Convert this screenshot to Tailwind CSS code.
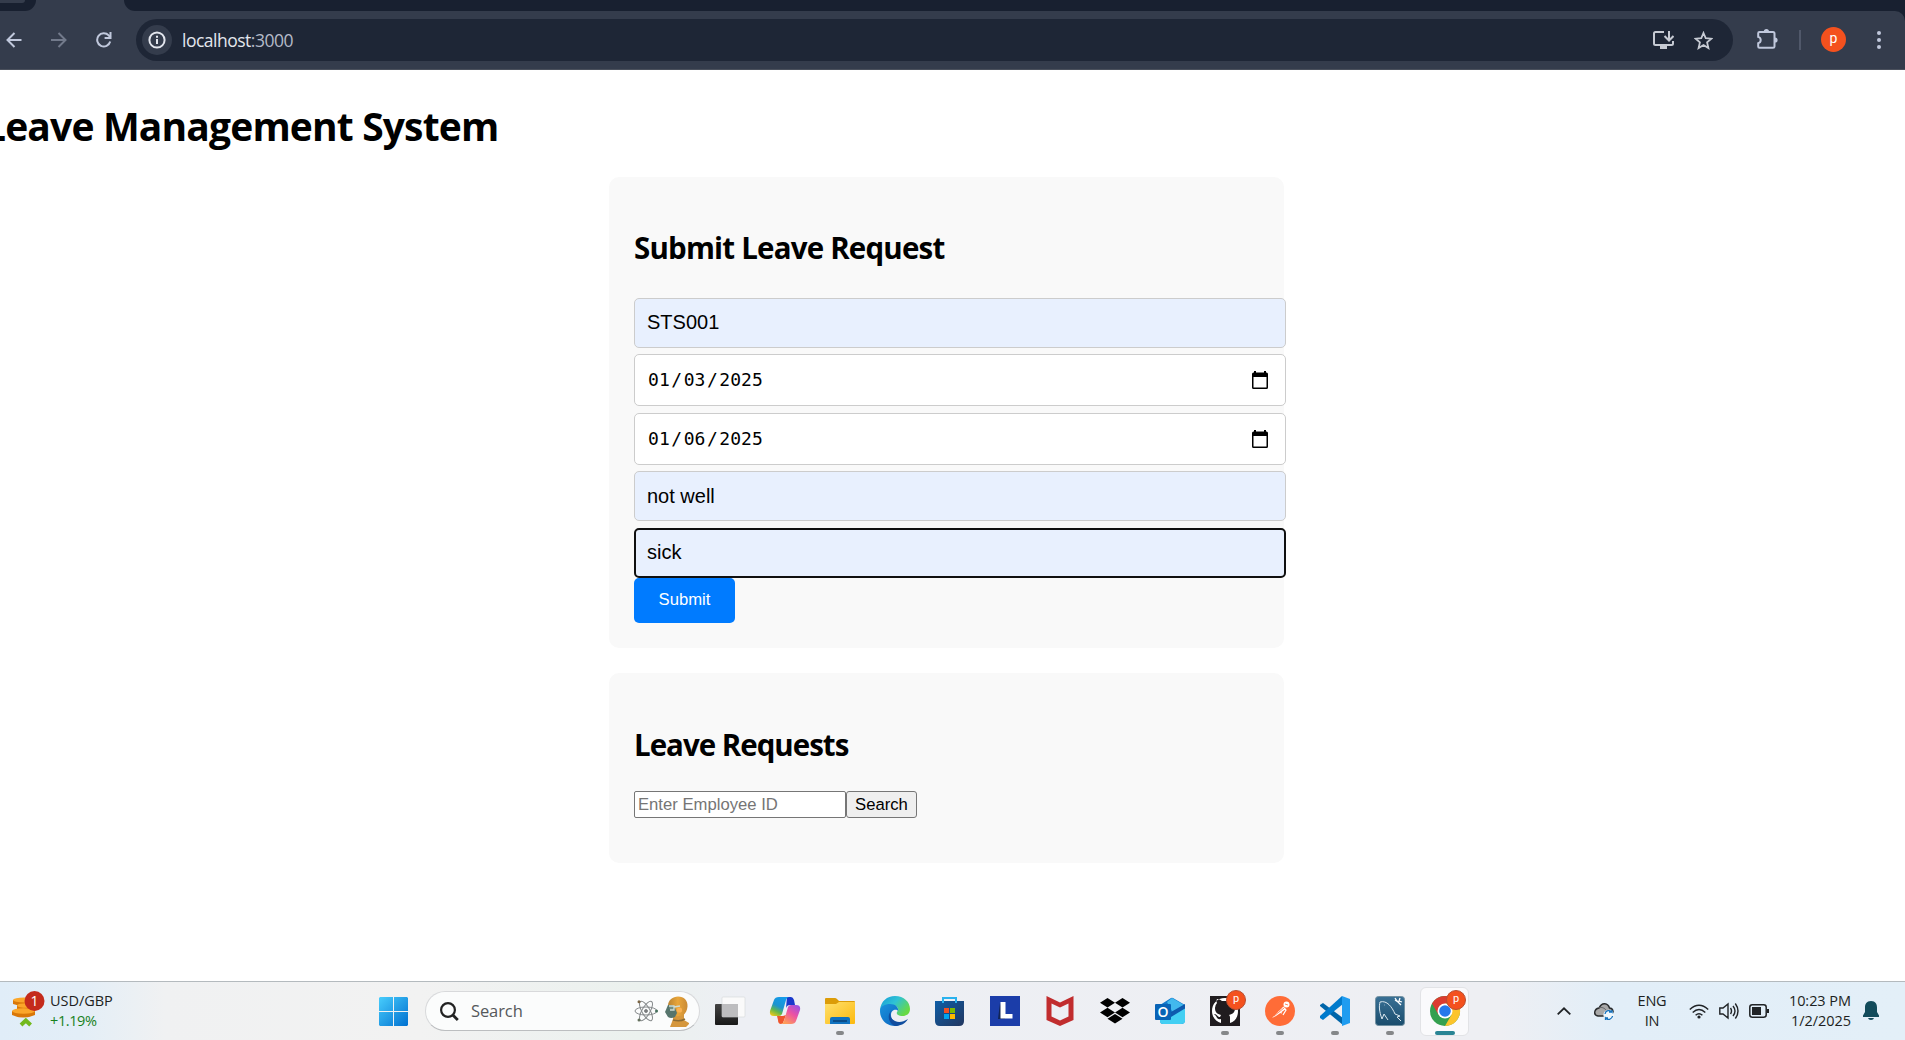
<!DOCTYPE html>
<html lang="en">
<head>
<meta charset="utf-8">
<title>Leave Management System</title>
<script src="https://cdn.jsdelivr.net/npm/@tailwindcss/browser@4"></script>
</head>
<body class="w-[1905px] h-[1040px] overflow-hidden bg-white text-black flex flex-col font-['Open_Sans','Noto_Sans',sans-serif]">

<!-- Browser chrome -->
<header class="h-[70px] shrink-0 bg-[#343c4c] border-b border-[#4a505c] flex flex-col">
  <div class="h-[11px] flex justify-between shrink-0">
    <div class="w-9 bg-[#182030] rounded-br-[14px]"><div class="w-[25px] h-[3px] bg-[#343c4c] rounded-br-lg"></div></div>
    <div class="w-[1781px] bg-[#182030] rounded-bl-[14px]"></div>
  </div>
  <div class="flex items-center h-[58px] bg-[#182030]">
   <div class="flex items-center w-full h-full bg-[#343c4c] rounded-tr-[10px]">
    <svg class="w-4 h-4 ml-[6px] shrink-0" viewBox="0 0 16 16" fill="none" stroke="#c0c8dc" stroke-width="2"><path d="M15.5 8H1.5M8.5 1 1.5 8l7 7"/></svg>
    <svg class="w-4 h-4 ml-[29px] shrink-0" viewBox="0 0 16 16" fill="none" stroke="#727a8b" stroke-width="2"><path d="M0 8h14M7.500 1l7 7-7 7"/></svg>
    <svg class="w-4 h-4 ml-[29px] shrink-0" viewBox="0 0 16 16" fill="none" stroke="#c0c8dc" stroke-width="2"><path d="M14.200 9.500A6.600 6.600 0 1 1 12.700 3.400L14.500 5.500"/><path d="M14.500 0v6H8.600"/></svg>
    <div class="ml-6 w-[1597px] h-[42px] rounded-full bg-[#1e2636] flex items-center shrink-0">
      <div class="ml-[6px] w-[30px] h-[30px] rounded-full bg-[#343c4c] flex items-center justify-center">
        <svg class="w-[18px] h-[18px]" viewBox="0 0 18 18" fill="none" stroke="#e3e6ee" stroke-width="2"><circle cx="9" cy="9" r="7.600"/><path d="M9 8v5M9 4.700v2"/></svg>
      </div>
      <div class="ml-[10px] text-[17.5px] leading-6 tracking-[-0.5px] text-[#e3e6ee]">localhost<span class="text-[#b4bac8]">:3000</span></div>
      <svg class="ml-auto w-[21px] h-[18px]" viewBox="0 0 21 18" fill="none" stroke="#c6cad3" stroke-width="2"><path d="M11 1H2.500Q1 1 1 2.500v10Q1 14 2.500 14h16q1.500 0 1.500-1.500V10"/><path d="M7 16.500h7" stroke-width="3"/><path d="M16 0v9M11.500 5l4.500 4.500L20.500 5"/></svg>
      <svg class="ml-[20px] mr-[20px] w-[19px] h-[19px]" viewBox="0 0 19 19" fill="none" stroke="#c6cad3" stroke-width="1.800"><path d="m9.500 2 2.200 5.200 5.700.5-4.300 3.700 1.300 5.600-4.900-3-4.900 3 1.300-5.600L1.600 7.700l5.700-.5Z"/></svg>
    </div>
    <svg class="ml-6 mb-[3px] w-[21px] h-[21px] shrink-0" viewBox="0 0 21 21"><path d="M2.500 4H16q1.500 0 1.500 1.500v13q0 1.300-1.500 1.300H2.500Q1.200 19.800 1.200 18.500V15.300a3.300 3.300 0 0 0 0-6.400V5.300Q1.200 4 2.500 4Z" fill="none" stroke="#c0c8dc" stroke-width="2"/><path d="M6.800 3.500a2.600 2.600 0 0 1 5.200 0zM18 9.400a2.600 2.600 0 0 1 0 5.200z" fill="#c0c8dc"/></svg>
    <div class="ml-[21px] w-[2px] h-5 bg-[#50586a]"></div>
    <div class="ml-5 mb-px w-[25px] h-[25px] rounded-full bg-[#f4511e] text-white text-[14px] leading-[22px] text-center font-['Roboto']">p</div>
    <div class="ml-[31px] flex flex-col gap-[3px]"><i class="w-1 h-1 rounded-full bg-[#c0c8dc]"></i><i class="w-1 h-1 rounded-full bg-[#c0c8dc]"></i><i class="w-1 h-1 rounded-full bg-[#c0c8dc]"></i></div>
   </div>
  </div>
</header>

<!-- Page -->
<main class="h-[911px] shrink-0 overflow-hidden">
  <h1 class="ml-[-16px] pt-[29px] h-[107px] text-[39px] leading-[54px] font-bold tracking-[-0.85px] whitespace-nowrap">Leave Management System</h1>
  <section class="ml-[609px] w-[675px] h-[471px] bg-[#f9f9f9] rounded-[10px] px-[25px] pt-[51px]">
    <h2 class="text-[29.5px] leading-10 font-bold tracking-[-0.8px] mb-[30px] whitespace-nowrap">Submit Leave Request</h2>
    <form class="w-[652px] text-[20px] font-['Liberation_Sans',sans-serif]">
      <div class="h-[50px] mb-[6px] border border-[#ccc] rounded-[5px] bg-[#e8f0fe] px-3 leading-[46px]">STS001</div>
      <div class="h-[52px] mb-[7px] border border-[#ccc] rounded-[5px] bg-white pl-[13px] pr-[17px] flex items-center justify-between">
        <div class="mb-[2px] font-['DejaVu_Sans_Mono',monospace] text-[18px] tracking-[0.05px]">01<span class="mx-[1.5px]">/</span>03<span class="mx-[1.5px]">/</span>2025</div>
        <svg class="w-4 h-[18px]" viewBox="0 0 16 18"><path d="M2 0h2v1.500h8V0h2v1.500h.5Q16 1.500 16 3v13.500q0 1.500-1.500 1.500h-13Q0 18 0 16.500V3q0-1.500 1.500-1.500H2ZM1.500 6v10.500h13V6Z"/></svg>
      </div>
      <div class="h-[52px] mb-[6px] border border-[#ccc] rounded-[5px] bg-white pl-[13px] pr-[17px] flex items-center justify-between">
        <div class="mb-[2px] font-['DejaVu_Sans_Mono',monospace] text-[18px] tracking-[0.05px]">01<span class="mx-[1.5px]">/</span>06<span class="mx-[1.5px]">/</span>2025</div>
        <svg class="w-4 h-[18px]" viewBox="0 0 16 18"><path d="M2 0h2v1.500h8V0h2v1.500h.5Q16 1.500 16 3v13.500q0 1.500-1.500 1.500h-13Q0 18 0 16.500V3q0-1.500 1.500-1.500H2ZM1.500 6v10.500h13V6Z"/></svg>
      </div>
      <div class="h-[50px] mb-[7px] border border-[#ccc] rounded-[5px] bg-[#e8f0fe] px-3 leading-[48px]">not well</div>
      <div class="h-[50px] border-2 border-[#101010] rounded-[5px] bg-[#e8f0fe] px-[11px] leading-[44px]">sick</div>
      <div class="w-[101px] h-[45px] rounded-[5px] bg-[#007bff] text-white text-[16.67px] leading-[43px] text-center">Submit</div>
    </form>
  </section>
  <section class="mt-[25px] ml-[609px] w-[675px] h-[190px] bg-[#f9f9f9] rounded-[10px] px-[25px] pt-[52px]">
    <h2 class="text-[29.5px] leading-10 font-bold tracking-[-1px] mb-[26px] whitespace-nowrap">Leave Requests</h2>
    <div class="flex text-[16.67px] leading-[25px] font-['Liberation_Sans',sans-serif]">
      <div class="w-[212px] h-[27px] border border-[#767676] rounded-[2px] bg-white text-[#757575] pl-[3px]">Enter Employee ID</div>
      <div class="w-[71px] h-[27px] border border-[#767676] rounded-[3px] bg-[#efefef] text-center">Search</div>
    </div>
  </section>
</main>

<!-- Taskbar -->
<footer class="h-[59px] shrink-0 border-t border-[#b4babe] flex items-center bg-[linear-gradient(90deg,#e0edf8_0,#e3eef7_80px,#f0f1f2_165px,#f2f2f2_420px,#ebf1ee_640px,#edeff4_740px,#eeeff3_1500px,#e2eef8_1610px,#e3eff8_1905px)] text-[#1d1f22]">
  <div class="w-[379px] flex items-center pl-[11px] shrink-0">
    <svg class="w-[35px] h-10" viewBox="0 0 35 40"><g fill="#d97708"><path d="M2 9v4q11 4 22 0V9z"/><path d="M6 14v5q9 3 20 0v-5z"/><path d="M1 20v4q11 5 23 0v-4z"/></g><g fill="#fba62a"><ellipse cx="13" cy="9" rx="11" ry="2.500"/><ellipse cx="16" cy="14.500" rx="10" ry="2.300"/><ellipse cx="12.500" cy="20" rx="11.500" ry="2.800"/></g><path d="m10 34 4.800-4.500L19.600 34" fill="none" stroke="#72b91d" stroke-width="4"/><circle cx="23.500" cy="10" r="10" fill="#c42b1c"/><text x="23.500" y="15" text-anchor="middle" font-family="Open Sans" font-size="14" fill="#fff">1</text></svg>
    <div class="ml-[4px] text-[14.5px] leading-5 tracking-[-0.05px]"><div>USD/GBP</div><div class="text-[#17811c] tracking-[-0.4px]">+1.19%</div></div>
  </div>
  <svg class="w-[29px] h-[29px] shrink-0" viewBox="0 0 29 29"><defs><linearGradient id="win" x1="0" y1="0" x2="29" y2="29" gradientUnits="userSpaceOnUse"><stop stop-color="#48cdfc"/><stop offset="1" stop-color="#0070d0"/></linearGradient></defs><path fill="url(#win)" d="M1 0h13v14H0V1ZM15 0h13l1 1v13H15ZM0 15h14v14H1l-1-1ZM15 15h14v13l-1 1H15Z"/></svg>
  <div class="ml-[17px] w-[275px] h-[40px] rounded-full bg-[#fbfcfc] border border-[#d8d9db] border-b-[#bcbec0] flex items-center shrink-0">
    <svg class="ml-[14px] w-[19px] h-[19px]" viewBox="0 0 19 19" fill="none" stroke="#222" stroke-width="2.200"><circle cx="8" cy="8" r="6.900"/><path d="m12.800 13 5 5" stroke-width="2.800"/></svg>
    <div class="ml-[12px] text-[16.5px] tracking-[-0.1px] text-[#55585b]">Search</div>
    <svg class="ml-auto w-6 h-[22px]" viewBox="0 0 24 22" fill="none" stroke="#85898b" stroke-width="1"><ellipse cx="12" cy="11" rx="11" ry="4"/><ellipse cx="12" cy="11" rx="11" ry="4" transform="rotate(60 12 11)"/><ellipse cx="12" cy="11" rx="11" ry="4" transform="rotate(120 12 11)"/><circle cx="12" cy="11" r="1.500" fill="#777"/><circle cx="5" cy="1.800" r="1.500" fill="#7b6544" stroke="none"/><circle cx="22.500" cy="11" r="1.500" fill="#47705d" stroke="none"/><circle cx="5" cy="20" r="1.500" fill="#64715d" stroke="none"/></svg>
    <svg class="ml-[6px] mr-[10px] w-[25px] h-[31px]" viewBox="0 0 25 31"><defs><linearGradient id="head" x1="0" x2="1"><stop stop-color="#b98332"/><stop offset=".5" stop-color="#e9a63a"/><stop offset="1" stop-color="#c98a35"/></linearGradient></defs><path d="M9 18h11v6l5 3v1l-3 3H6q2-5 3-8Z" fill="#d5973d"/><path d="M4 10C4 4 9 .5 14 .5c6 0 10 4 9.500 10-.3 4-2 7-4.500 9l-8 1-5-3Z" fill="url(#head)"/><path d="m4 9-3 7 3 5q3 2 7 0l2-4-2-5-3-3Z" fill="#56756c"/><path d="M5 10h5v4H6M10 11l6-1" stroke="#cfdcd4" stroke-width="1.300" fill="#718f85"/><circle cx="15.500" cy="14" r="2.600" fill="#fbb252"/><path d="M9 24q7 2 12-1" stroke="#8b6b32" stroke-width="1.500" fill="none"/></svg>
  </div>

  <div class="ml-[5px] flex shrink-0 h-full [&>div]:w-[55px] [&>div]:h-full [&>div]:relative [&>div]:flex [&>div]:items-center [&>div]:justify-center [&_svg]:w-[30px] [&_svg]:h-[30px] [&_svg]:overflow-visible">
    <div class="-ml-[3px]"><svg viewBox="0 0 30 30"><defs><linearGradient id="tv" x1="0" y1="0" x2="0" y2="1"><stop stop-color="#444"/><stop offset="1" stop-color="#181818"/></linearGradient></defs><rect y="8" width="23" height="21" rx="1" fill="url(#tv)"/><rect x="7" y="1" width="23" height="20" rx="1" fill="#fafafa" stroke="#d5d6d8" stroke-width=".6"/><path d="M7 8h16v13H7Z" fill="#bdbdbf"/></svg></div>
    <div><svg viewBox="0 0 30 30"><defs><linearGradient id="ca" x1=".6" y1="0" x2=".1" y2="1"><stop stop-color="#149bea"/><stop offset=".45" stop-color="#1c93cf"/><stop offset=".7" stop-color="#63b74b"/><stop offset="1" stop-color="#fbcb14"/></linearGradient><linearGradient id="cb" x1="1" y1="0" x2=".3" y2="1"><stop stop-color="#8c52ee"/><stop offset=".5" stop-color="#ec52a4"/><stop offset="1" stop-color="#ff9d57"/></linearGradient></defs><path d="M17 1h4q2 0 3 3l1 5h-5q-3 0-4 3Z" fill="#1938cc"/><path d="M7 20h6l3-1-3 8q-1 1-2 1-3 0-3-4Z" fill="#ef552d"/><path d="M9 1h10q-2 0-3 3l-4 14q-1 2-3 2H4q-5 0-4-5L4 4q1-3 5-3Z" fill="url(#ca)"/><path d="M21 9h5q5 0 4 5l-4 11q-1 3-5 3H11q2 0 3-3l4-14q1-2 3-2Z" fill="url(#cb)"/></svg></div>
    <div><svg viewBox="0 0 30 30"><defs><linearGradient id="fo" x1="0" y1="0" x2="1" y2="1"><stop stop-color="#ffe06c"/><stop offset="1" stop-color="#fcb90e"/></linearGradient></defs><path d="M0 3q0-1 1-1h9q1 0 2 1l2 2h15q1 0 1 1v6H0Z" fill="#dc9c08"/><path d="M0 8h11l3-2h16v21q0 1-1 1H1q-1 0-1-1Z" fill="url(#fo)"/><path d="M5 28v-5q0-2 2-2h16q2 0 2 2v5Z" fill="#0f71bf"/><path d="M8 25h14" stroke="#073f77" stroke-width="1.500"/></svg><i class="absolute bottom-[5px] w-2 h-1 rounded-full bg-[#858789]"></i></div>
    <div><svg viewBox="0 0 30 30"><defs><linearGradient id="ea" x1="0" y1="0" x2="1" y2=".6"><stop stop-color="#159ad7"/><stop offset=".5" stop-color="#2fc2d5"/><stop offset="1" stop-color="#68da43"/></linearGradient><linearGradient id="eb" x1="0" y1="0" x2="1" y2="1"><stop stop-color="#1a92dc"/><stop offset="1" stop-color="#0a60bd"/></linearGradient></defs><path d="M0 14C1 5 7 0 15 0c9 0 15 6 15 13 0 5-4 7-7 7-5 0-7-2-6-4 3-3 0-7-5-7C6 9 1 11 0 16Z" fill="url(#ea)"/><path d="M0 15C0 10 5 8 10 8c6 0 9 4 8 7-1-2-7-2-7 4 0 6 6 9 12 8-3 2-5 3-8 3C6 30 0 23 0 15Z" fill="url(#eb)"/><path d="M12 14c-3 3-2 9 3 11 4 2 8 1 13-2-3 5-8 7-13 7-6-2-9-11-3-16Z" fill="#104d9f"/></svg></div>
    <div><svg viewBox="0 0 30 30"><defs><linearGradient id="st" x1="0" y1="0" x2="1" y2="1"><stop stop-color="#0e5da6"/><stop offset="1" stop-color="#22365f"/></linearGradient></defs><path d="M0 5h29v20q0 5-5 5H5q-5 0-5-5Z" fill="url(#st)"/><path d="M8 7V2h13v5" fill="none" stroke="#29b2ee" stroke-width="2"/><path d="M9 12h5v5H9Z" fill="#f25022"/><path d="M15 12h5v5h-5Z" fill="#7fba00"/><path d="M9 18h5v5H9Z" fill="#00a4ef"/><path d="M15 18h5v5h-5Z" fill="#ffb900"/></svg></div>
    <div><svg viewBox="0 0 30 30"><path d="M0 0h30v30H0Z" fill="#1b3da9"/><path d="m10 7-2 16h7Z" fill="#102456"/><path d="M10.500 6h5v12h7v4.500H10.500Z" fill="#fff"/></svg></div>
    <div><svg viewBox="0 0 30 30"><path d="m1.500 0 13.500 6.500L28.500 0v24L15 30 1.500 24Zm5 7.500v13L15 24.500l8.500-4v-13L15 11.500Z" fill="#c12d2e" fill-rule="evenodd"/></svg></div>
    <div><svg viewBox="0 0 30 30"><path d="m7.500 2 7.500 4.800-7.500 4.800L0 6.800Zm15 0L30 6.800l-7.500 4.800L15 6.800Zm-15 9.800 7.500 4.700-7.500 4.800L0 16.500Zm15 0 7.500 4.700-7.500 4.800-7.500-4.800ZM15 18l7.500 4.700L15 27.500l-7.500-4.800Z" fill="#000"/></svg></div>
    <div><svg viewBox="0 0 30 30"><path d="M5 9 16 2q1-.6 2 0l12 7v15q0 4-4 4H8q-3 0-3-4Z" fill="#1479cb"/><path d="m12 6 5-4 12 7-11 8Z" fill="#42b8ed"/><path d="m16 16 14-8v8L16 24Z" fill="#0f56a9"/><path d="m5 22 25-10v13q0 3-4 3H8q-3 0-3-3Z" fill="#43cff3"/><path d="M16 17 29 9.500q1 1 1 3L16 21Z" fill="#0e5aae"/><rect y="8" width="16" height="16" rx="1" fill="#0863b6"/><text x="8" y="21" text-anchor="middle" font-family="Open Sans" font-weight="600" font-size="14" fill="#fff">O</text></svg></div>
    <div><svg viewBox="0 0 30 30"><path d="M0 0h30v30H0Z" fill="#201c1f"/><path d="M15 2C7 2 2 8 2 15c0 6 4 11 9 12v-4c-3 1-4-1-5-3l-2-2c3-.5 3 3 6 3l1-2c-4-1-6-3-6-7q0-3 2-5-1-2 0-4 3 0 5 2h6q2-2 5-2 1 2 0 4 2 2 2 5c0 4-2 6-6 7 1 1 1 2 1 3v5c5-1 8-6 8-12C28 8 23 2 15 2Z" fill="#fff"/></svg><i class="absolute bottom-[5px] w-2 h-1 rounded-full bg-[#858789]"></i><span class="absolute left-[29px] top-[8px] w-5 h-5 rounded-full bg-[#f4511e] border border-[#b84e31] text-white text-[11px] leading-[16px] text-center font-['Roboto']">p</span></div>
    <div><svg viewBox="0 0 30 30"><circle cx="15" cy="15" r="15" fill="#ff6c37"/><path d="m7 22 11-11 3 2-10 7Z" fill="#fff"/><circle cx="21.500" cy="8.500" r="3" fill="#fff"/><path d="m18 11 3 3-3 5M13 16l4 1" fill="none" stroke="#fff" stroke-width="1.200"/><path d="m9 20 10-8M20 8l3 1" stroke="#ff6c37" stroke-width=".8"/></svg><i class="absolute bottom-[5px] w-2 h-1 rounded-full bg-[#858789]"></i></div>
    <div><svg viewBox="0 0 30 30"><path d="m0 9 3-2 20 15v7L0 10Z" fill="#0065a9"/><path d="M22 0 0 20v2l3 2L23 8Z" fill="#007acc"/><path d="m22 0 8 3v24l-8 3Z" fill="#1f9cf0"/></svg><i class="absolute bottom-[5px] w-2 h-1 rounded-full bg-[#858789]"></i></div>
    <div><svg viewBox="0 0 30 30"><defs><linearGradient id="my" x1="0" y1="0" x2="0" y2="1"><stop stop-color="#397095"/><stop offset="1" stop-color="#1b4d6d"/></linearGradient></defs><rect x=".5" y=".5" width="29" height="29" rx="3" fill="url(#my)" stroke="#7190a1"/><path d="M7 23C4 15 4 10 5 6c7-2 12 5 15 12l5 2-3 1 4 4M7 23l2-5 4 6M9 9h.5" fill="none" stroke="#dbe7ee" stroke-width="1"/><path d="m20 2 2 3 4 4M20 4l3 2M25 2l-1 3 3 1" stroke="#fff" stroke-width="1.300" fill="none"/></svg><i class="absolute bottom-[5px] w-2 h-1 rounded-full bg-[#858789]"></i></div>
    <div><span class="absolute left-[3px] top-[5px] w-[49px] h-[49px] rounded-[6px] bg-[#fafafc] border border-[#e2e3e6]"></span><svg class="relative" viewBox="0 0 30 30"><circle cx="15" cy="15" r="15" fill="#34a04f"/><path d="M2 7.500A15 15 0 0 1 28 7.500H15L8.500 18.700Z" fill="#dc3c30"/><path d="M15 7.500h13A15 15 0 0 1 15 30l6.500-11.300Z" fill="#fcc42c"/><circle cx="15" cy="15" r="7.500" fill="#fff"/><circle cx="15" cy="15" r="5.800" fill="#2678ea"/></svg><i class="absolute bottom-[5px] w-5 h-1 rounded-full bg-[#298494]"></i><span class="absolute left-[29px] top-[8px] w-5 h-5 rounded-full bg-[#f4511e] border border-[#b84e31] text-white text-[11px] leading-[16px] text-center font-['Roboto']">p</span></div>
  </div>

  <div class="ml-auto mr-[26px] flex items-center shrink-0">
    <svg class="w-[14px] h-2" viewBox="0 0 14 8" fill="none" stroke="#202326" stroke-width="1.800"><path d="m.7 7.300 6.300-6 6.300 6"/></svg>
    <svg class="ml-[23px] w-[20px] h-[18px]" viewBox="0 0 20 18"><path d="M4 14c-5-1-4-7 1-8C8-.5 14 1 15.500 6c4 0 5 6 1 8Z" fill="#a8a8a8" stroke="#292b2d" stroke-width="1.500"/><path d="M5 6q4-2 8 3" fill="none" stroke="#68696b"/><circle cx="14.700" cy="13" r="5.300" fill="#eef7fd"/><path d="M11 12a4 4 0 0 1 7-2v-2M18 10h-3M18.500 14a4 4 0 0 1-7 2v2M11 16h3" fill="none" stroke="#1672bd" stroke-width="1.300"/></svg>
    <div class="ml-[23px] w-[30px] text-center text-[14.5px] leading-5 tracking-[-0.2px] whitespace-nowrap"><div>ENG</div><div>IN</div></div>
    <svg class="ml-[22px] w-5 h-[15px]" viewBox="0 0 20 15" fill="none" stroke="#202326" stroke-width="1.500"><path d="M.8 5.500Q10-3 19.200 5.500M3.700 8.500q6.300-6 12.600 0M6.600 11.300q3.400-3 6.800 0"/><circle cx="10" cy="13" r="1.600" fill="#202326" stroke="none"/></svg>
    <svg class="ml-[10px] w-5 h-[18px]" viewBox="0 0 20 18" fill="none" stroke="#202326" stroke-width="1.400"><path d="M.8 6v6H4l5 4V2L4 6ZM11.500 6q2 3 0 6M14 4q4 5 0 10M16.300 1.500q5.400 7.500 0 15"/></svg>
    <svg class="ml-[10px] w-5 h-[14px]" viewBox="0 0 20 14"><rect x=".8" y=".8" width="16.400" height="12.400" rx="2.500" fill="none" stroke="#202326" stroke-width="1.500"/><path d="M3 3h9v8H3ZM18 5h2v4h-2Z" fill="#202326"/></svg>
    <div class="ml-[18px] w-[64px] flex flex-col items-end text-[14.5px] leading-5 tracking-[-0.05px] whitespace-nowrap"><div>10:23 PM</div><div>1/2/2025</div></div>
    <svg class="ml-3 w-4 h-5" viewBox="0 0 16 20" fill="#124b5b"><path d="M8 0C3.500 0 2 3 2 6.500V11l-2 3.500V16h16v-1.500L14 11V6.500C14 3 12.500 0 8 0ZM5 17h6q-.5 2-3 2t-3-2Z"/></svg>
  </div>
</footer>
</body>
</html>
